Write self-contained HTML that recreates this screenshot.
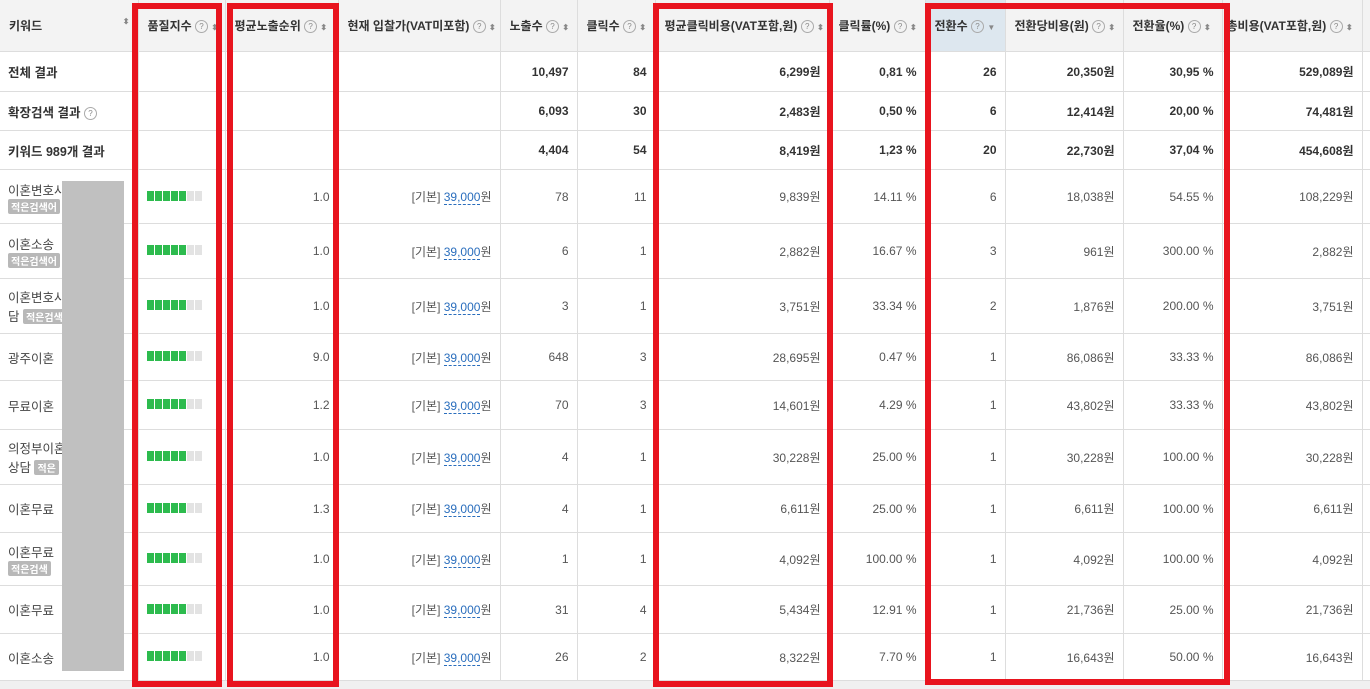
<!DOCTYPE html>
<html><head><meta charset="utf-8"><style>
body{margin:0;width:1370px;height:689px;overflow:hidden;background:#f0f0f0;font-family:"Liberation Sans","Noto Sans CJK KR",sans-serif;font-size:12px;color:#555;position:relative}
table{position:absolute;left:0;top:0;border-collapse:collapse;table-layout:fixed;width:1370px;background:#fff}
td,th{border-bottom:1px solid #ddd;border-right:1px solid #ddd;padding:0 8px;text-align:right;white-space:nowrap;overflow:hidden}
th{background:#f3f3f3;font-weight:bold;color:#333;height:51px;text-align:left;font-size:12px;padding-left:9px}
th.s{background:#dde7ef}
.q{display:inline-block;width:11px;height:11px;border:1px solid #aaa;border-radius:50%;font-size:8px;line-height:11px;text-align:center;color:#888;font-weight:normal;vertical-align:1px}
.ar{font-size:8px;color:#888}
tr.t td{font-weight:bold;color:#333}
td.k{text-align:left;color:#444;font-size:12.5px}
.b{display:inline-block;background:#b8b8b8;color:#fff;font-size:10px;padding:0 3px;border-radius:2px;font-weight:bold}
.bar{display:inline-block;vertical-align:middle}
.bar i{display:inline-block;width:7px;height:10px;margin-right:1px;background:#2dbb4e}
.bar i.g{background:#e3e3e3}
a{color:#2a6ebd;text-decoration:none;border-bottom:1px dashed #2a6ebd}
.r{position:absolute;border:6px solid #e8141e;box-sizing:border-box}
</style></head><body>
<table>
<colgroup><col style="width:138px"><col style="width:87px"><col style="width:113px"><col style="width:162px"><col style="width:77px"><col style="width:78px"><col style="width:174px"><col style="width:96px"><col style="width:80px"><col style="width:118px"><col style="width:99px"><col style="width:140px"><col style="width:8px"></colgroup>
<tr><th>키워드<span style="float:right" class="ar">⬍</span></th><th>품질지수 <span class="q">?</span> <span class="ar">⬍</span></th><th>평균노출순위 <span class="q">?</span> <span class="ar">⬍</span></th><th>현재 입찰가(VAT미포함) <span class="q">?</span> <span class="ar">⬍</span></th><th>노출수 <span class="q">?</span> <span class="ar">⬍</span></th><th>클릭수 <span class="q">?</span> <span class="ar">⬍</span></th><th>평균클릭비용(VAT포함,원) <span class="q">?</span> <span class="ar">⬍</span></th><th>클릭률(%) <span class="q">?</span> <span class="ar">⬍</span></th><th class="s">전환수 <span class="q">?</span> <span class="ar">▼</span></th><th>전환당비용(원) <span class="q">?</span> <span class="ar">⬍</span></th><th>전환율(%) <span class="q">?</span> <span class="ar">⬍</span></th><th style="padding-left:4px">총비용(VAT포함,원) <span class="q">?</span> <span class="ar">⬍</span></th><th></th></tr>
<tr class="t" style="height:40px"><td class="k">전체 결과</td><td></td><td></td><td></td><td>10,497</td><td>84</td><td>6,299원</td><td>0,81 %</td><td>26</td><td>20,350원</td><td>30,95 %</td><td>529,089원</td><td></td></tr>
<tr class="t" style="height:39px"><td class="k">확장검색 결과 <span class="q">?</span></td><td></td><td></td><td></td><td>6,093</td><td>30</td><td>2,483원</td><td>0,50 %</td><td>6</td><td>12,414원</td><td>20,00 %</td><td>74,481원</td><td></td></tr>
<tr class="t" style="height:39px"><td class="k">키워드 989개 결과</td><td></td><td></td><td></td><td>4,404</td><td>54</td><td>8,419원</td><td>1,23 %</td><td>20</td><td>22,730원</td><td>37,04 %</td><td>454,608원</td><td></td></tr>
<tr style="height:54px"><td class="k">이혼변호사<br><span class="b">적은검색어</span></td><td style="text-align:left"><span class="bar"><i></i><i></i><i></i><i></i><i></i><i class="g"></i><i class="g"></i></span></td><td>1.0</td><td>[기본] <a>39,000</a>원</td><td>78</td><td>11</td><td>9,839원</td><td>14.11 %</td><td>6</td><td>18,038원</td><td>54.55 %</td><td>108,229원</td><td></td></tr>
<tr style="height:55px"><td class="k">이혼소송<br><span class="b">적은검색어</span></td><td style="text-align:left"><span class="bar"><i></i><i></i><i></i><i></i><i></i><i class="g"></i><i class="g"></i></span></td><td>1.0</td><td>[기본] <a>39,000</a>원</td><td>6</td><td>1</td><td>2,882원</td><td>16.67 %</td><td>3</td><td>961원</td><td>300.00 %</td><td>2,882원</td><td></td></tr>
<tr style="height:55px"><td class="k">이혼변호사<br>담 <span class="b">적은검색</span></td><td style="text-align:left"><span class="bar"><i></i><i></i><i></i><i></i><i></i><i class="g"></i><i class="g"></i></span></td><td>1.0</td><td>[기본] <a>39,000</a>원</td><td>3</td><td>1</td><td>3,751원</td><td>33.34 %</td><td>2</td><td>1,876원</td><td>200.00 %</td><td>3,751원</td><td></td></tr>
<tr style="height:47px"><td class="k">광주이혼</td><td style="text-align:left"><span class="bar"><i></i><i></i><i></i><i></i><i></i><i class="g"></i><i class="g"></i></span></td><td>9.0</td><td>[기본] <a>39,000</a>원</td><td>648</td><td>3</td><td>28,695원</td><td>0.47 %</td><td>1</td><td>86,086원</td><td>33.33 %</td><td>86,086원</td><td></td></tr>
<tr style="height:49px"><td class="k">무료이혼</td><td style="text-align:left"><span class="bar"><i></i><i></i><i></i><i></i><i></i><i class="g"></i><i class="g"></i></span></td><td>1.2</td><td>[기본] <a>39,000</a>원</td><td>70</td><td>3</td><td>14,601원</td><td>4.29 %</td><td>1</td><td>43,802원</td><td>33.33 %</td><td>43,802원</td><td></td></tr>
<tr style="height:55px"><td class="k">의정부이혼<br>상담 <span class="b">적은</span></td><td style="text-align:left"><span class="bar"><i></i><i></i><i></i><i></i><i></i><i class="g"></i><i class="g"></i></span></td><td>1.0</td><td>[기본] <a>39,000</a>원</td><td>4</td><td>1</td><td>30,228원</td><td>25.00 %</td><td>1</td><td>30,228원</td><td>100.00 %</td><td>30,228원</td><td></td></tr>
<tr style="height:48px"><td class="k">이혼무료</td><td style="text-align:left"><span class="bar"><i></i><i></i><i></i><i></i><i></i><i class="g"></i><i class="g"></i></span></td><td>1.3</td><td>[기본] <a>39,000</a>원</td><td>4</td><td>1</td><td>6,611원</td><td>25.00 %</td><td>1</td><td>6,611원</td><td>100.00 %</td><td>6,611원</td><td></td></tr>
<tr style="height:53px"><td class="k">이혼무료<br><span class="b">적은검색</span></td><td style="text-align:left"><span class="bar"><i></i><i></i><i></i><i></i><i></i><i class="g"></i><i class="g"></i></span></td><td>1.0</td><td>[기본] <a>39,000</a>원</td><td>1</td><td>1</td><td>4,092원</td><td>100.00 %</td><td>1</td><td>4,092원</td><td>100.00 %</td><td>4,092원</td><td></td></tr>
<tr style="height:48px"><td class="k">이혼무료</td><td style="text-align:left"><span class="bar"><i></i><i></i><i></i><i></i><i></i><i class="g"></i><i class="g"></i></span></td><td>1.0</td><td>[기본] <a>39,000</a>원</td><td>31</td><td>4</td><td>5,434원</td><td>12.91 %</td><td>1</td><td>21,736원</td><td>25.00 %</td><td>21,736원</td><td></td></tr>
<tr style="height:47px"><td class="k">이혼소송</td><td style="text-align:left"><span class="bar"><i></i><i></i><i></i><i></i><i></i><i class="g"></i><i class="g"></i></span></td><td>1.0</td><td>[기본] <a>39,000</a>원</td><td>26</td><td>2</td><td>8,322원</td><td>7.70 %</td><td>1</td><td>16,643원</td><td>50.00 %</td><td>16,643원</td><td></td></tr>
</table>
<div style="position:absolute;left:62px;top:181px;width:62px;height:490px;background:#c0c0c0"></div>
<div class="r" style="left:132px;top:3px;width:90px;height:684px"></div>
<div class="r" style="left:227px;top:3px;width:112px;height:684px"></div>
<div class="r" style="left:653px;top:3px;width:180px;height:684px"></div>
<div class="r" style="left:925px;top:3px;width:305px;height:682px"></div>
</body></html>
